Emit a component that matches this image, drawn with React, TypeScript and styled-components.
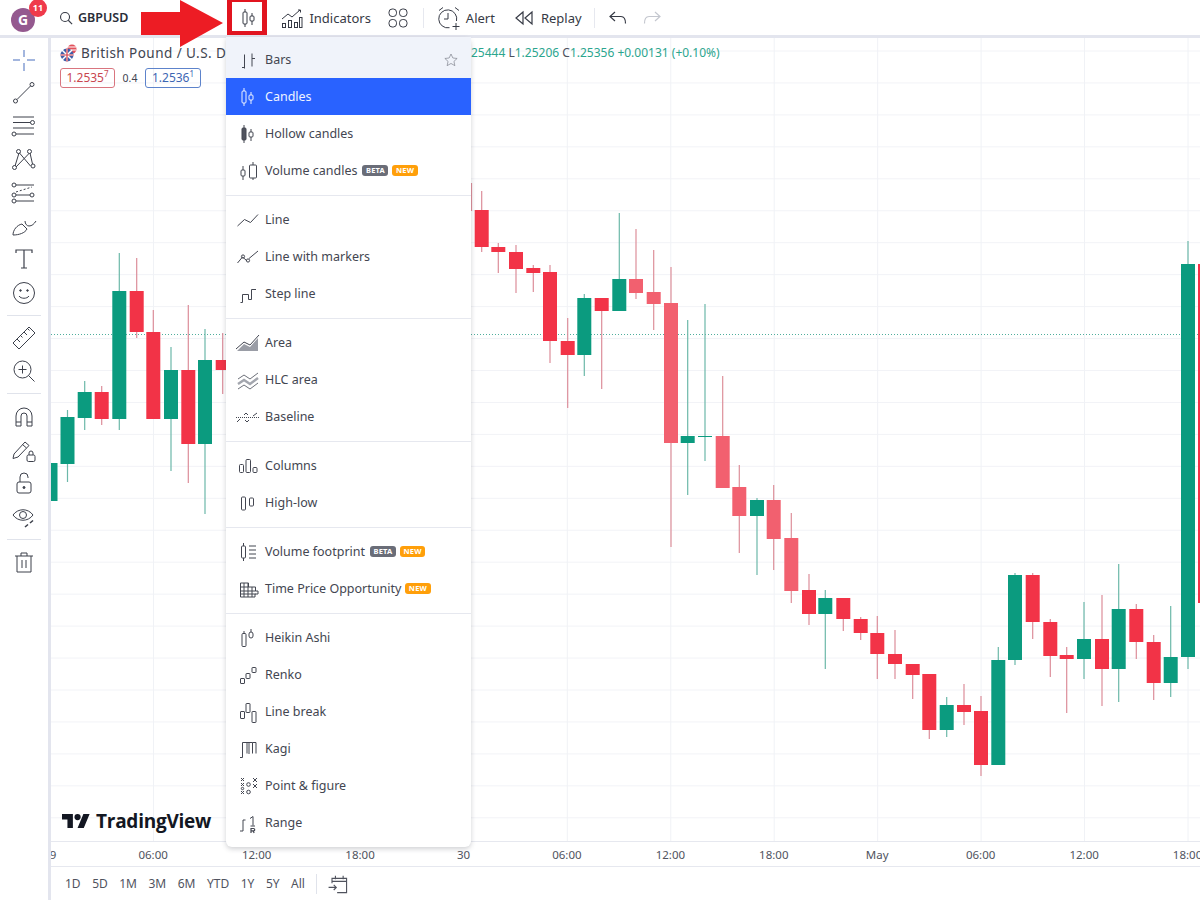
import * as React from 'react';
import styled, { createGlobalStyle } from 'styled-components';

const GlobalStyle = createGlobalStyle`
  html, body { margin: 0; padding: 0; background: #fff; }
  body { font-family: "Noto Sans", "Open Sans", Arial, sans-serif; color: #2a2e39; }
`;

type Kind = 'up' | 'down' | 'soft';
// x, wick top, wick bottom, body top, body bottom
type Candle = [number, number, number, number, number, Kind];

const candles: Candle[] = [
  [50.5, 463, 501, 463, 501, 'up'],
  [67.5, 410, 482, 417, 464, 'up'],
  [84.7, 381, 430, 392, 418, 'up'],
  [101.7, 386, 425, 392, 419, 'down'],
  [119.3, 253, 430, 291, 419, 'up'],
  [136.7, 258, 338, 291, 332, 'down'],
  [153.3, 310, 419, 332, 419, 'down'],
  [171, 347, 471, 370, 419, 'up'],
  [188.3, 305, 483, 370, 444, 'down'],
  [205, 329, 514, 360, 444, 'up'],
  [222.7, 333, 394, 360, 370, 'down'],
  [471.5, 183, 211, 211, 211, 'soft'],
  [481.7, 191, 252, 210, 247, 'down'],
  [498.3, 243, 273, 247, 252, 'down'],
  [516, 245, 293, 252, 269, 'down'],
  [533.3, 265, 292, 268, 273, 'down'],
  [550, 265, 363, 272, 341, 'down'],
  [567.7, 318, 408, 341, 355, 'down'],
  [584.3, 294, 376, 298, 355, 'up'],
  [601.7, 298, 389, 298, 311, 'down'],
  [619.3, 213, 311, 279, 311, 'up'],
  [636, 229, 299, 279, 293, 'soft'],
  [653.7, 250, 330, 292, 304, 'soft'],
  [671, 267, 547, 303, 443, 'soft'],
  [687.7, 320, 495, 436, 443, 'up'],
  [705, 304, 461, 436, 436.7, 'up'],
  [722.7, 376, 488, 436, 488, 'soft'],
  [739.3, 465, 553, 487, 516, 'soft'],
  [757, 498, 575, 500, 516, 'up'],
  [773.7, 485, 570, 500, 539, 'soft'],
  [791.3, 513, 603, 538, 591, 'soft'],
  [809, 574, 625, 590, 614, 'down'],
  [825.3, 590, 669, 598, 614, 'up'],
  [843.3, 598, 631, 598, 619, 'down'],
  [860.7, 617, 640, 619, 633, 'down'],
  [877.3, 616, 679, 633, 654, 'down'],
  [895, 630, 679, 654, 664, 'down'],
  [912.7, 664, 699, 664, 675, 'down'],
  [929.3, 674, 739, 674, 730, 'down'],
  [946.7, 697, 737, 705, 730, 'up'],
  [964, 684, 725, 705, 712, 'down'],
  [981, 696, 776, 711, 765, 'down'],
  [998.3, 647, 765, 660, 765, 'up'],
  [1015, 573, 665, 575, 660, 'up'],
  [1032.7, 573, 639, 575, 622, 'down'],
  [1050.3, 619, 677, 622, 656, 'down'],
  [1066.7, 647, 713, 655, 659, 'down'],
  [1084, 602, 679, 639, 659, 'up'],
  [1102, 595, 706, 639, 669, 'down'],
  [1118.7, 564, 702, 609, 669, 'up'],
  [1136.3, 604, 659, 609, 642, 'down'],
  [1153.7, 635, 700, 642, 683, 'down'],
  [1170.7, 606, 697, 657, 683, 'up'],
  [1188, 241, 669, 264, 657, 'up'],
  [1205, 250, 610, 264, 603, 'down'],
];

const bodyColor: Record<Kind, string> = { up: '#0b9b7f', down: '#f23347', soft: '#f2606f' };
const wickColor: Record<Kind, string> = { up: '#6cb8a9', down: '#dc8d99', soft: '#dd8f9a' };

const Page = styled.div`
  position: relative;
  width: 1200px;
  height: 900px;
  overflow: hidden;
  display: flex;
  flex-direction: column;
`;

const TopBar = styled.header`
  flex: 0 0 35px;
  display: flex;
  align-items: center;
  border-bottom: 3px solid #e3e5ee;
  font-size: 13px;
  color: #363a45;
`;

const Main = styled.div`
  flex: 1;
  display: flex;
  min-height: 0;
`;

const SideBar = styled.aside`
  flex: 0 0 48px;
  border-right: 3px solid #e3e5ee;
  padding-top: 5px;
  display: flex;
  flex-direction: column;
  color: #3c404b;
`;

const SideButton = styled.div`
  flex: 0 0 33.3px;
  display: flex;
  align-items: center;
  justify-content: center;
`;

const SideDivider = styled.div`
  flex: 0 0 12px;
  display: flex;
  align-items: center;
  justify-content: center;
  &::after {
    content: '';
    width: 34px;
    height: 1px;
    background: #e0e3eb;
  }
`;

const ChartColumn = styled.section`
  flex: 1;
  display: flex;
  flex-direction: column;
  min-width: 0;
`;

const ChartSvg = styled.svg`
  display: block;
  width: 1149px;
  height: 803px;
  flex: 0 0 803px;
`;

const TimeAxis = styled.div`
  flex: 0 0 26px;
  box-sizing: border-box;
  border-top: 1px solid #e6e8ef;
  border-bottom: 1px solid #e6e8ef;
  display: flex;
  align-items: center;
  overflow: hidden;
  font-size: 11.5px;
  color: #50535e;
`;

const TimeCell = styled.span<{ $lead?: boolean }>`
  flex: 0 0 103.45px;
  text-align: center;
  margin-left: ${p => (p.$lead ? '-53px' : '0')};
`;

const RangeBar = styled.footer`
  flex: 1;
  display: flex;
  align-items: center;
  padding-left: 14px;
  font-size: 12px;
  color: #50535e;
`;

const RangeItem = styled.span`
  margin-right: 11.5px;
`;

const RangeDivider = styled.span`
  width: 1px;
  height: 20px;
  background: #e0e3eb;
  margin: 0 9px 0 0;
`;

const AvatarWrap = styled.div`
  position: relative;
  width: 24px;
  height: 24px;
  margin: 4px 0 0 11px;
  border-radius: 50%;
  background: #94598f;
  color: #fff;
  font-size: 14px;
  font-weight: 700;
  display: flex;
  align-items: center;
  justify-content: center;
`;

const AvatarBadge = styled.span`
  position: absolute;
  top: -9px;
  right: -12px;
  width: 18px;
  height: 18px;
  border-radius: 50%;
  background: #ef3a4b;
  font-size: 9px;
  line-height: 18px;
  text-align: center;
`;

const ToolButton = styled.div<{ $left: number; $muted?: boolean }>`
  display: flex;
  align-items: center;
  gap: 3px;
  margin-left: ${p => p.$left}px;
  color: ${p => (p.$muted ? '#c4c7cf' : 'inherit')};
`;

const SymbolLabel = styled.span`
  font-size: 12.5px;
  font-weight: 600;
  color: #2a2e39;
`;

const ToolSep = styled.span<{ $left: number }>`
  width: 1px;
  height: 20px;
  background: #e6e8ef;
  margin-left: ${p => p.$left}px;
`;

const Glyph = styled.svg.attrs({ viewBox: '0 0 28 28' })<{ $size?: number }>`
  width: ${p => p.$size ?? 28}px;
  height: ${p => p.$size ?? 28}px;
  flex: none;
  fill: none;
  stroke: currentColor;
  stroke-width: 1;
`;

const Legend = styled.div`
  position: absolute;
  left: 60px;
  top: 43px;
  display: flex;
  flex-direction: column;
  gap: 6px;
`;

const LegendTop = styled.div`
  display: flex;
  align-items: center;
  height: 19px;
`;

const LegendTitle = styled.div`
  flex: 0 0 411px;
  display: flex;
  align-items: center;
  gap: 4px;
  font-size: 13.5px;
  letter-spacing: 0.45px;
  color: #40444f;
`;

const Ohlc = styled.div`
  font-size: 12px;
  color: #2ba58e;
  white-space: pre;
`;

const OhlcKey = styled.span`
  color: #4d515c;
`;

const PriceRow = styled.div`
  display: flex;
  align-items: center;
`;

const PriceChip = styled.span<{ $tone: 'sell' | 'buy' }>`
  box-sizing: border-box;
  height: 20px;
  width: ${p => (p.$tone === 'sell' ? 55 : 56)}px;
  border: 1px solid ${p => (p.$tone === 'sell' ? '#d9757f' : '#5d83cb')};
  border-radius: 3px;
  font-size: 12px;
  line-height: 18px;
  text-align: center;
  color: ${p => (p.$tone === 'sell' ? '#c9464f' : '#3d66b3')};
`;

const PriceTail = styled.sup`
  font-size: 8px;
  line-height: 0;
`;

const Spread = styled.span`
  width: 30px;
  text-align: center;
  font-size: 10.5px;
  color: #40444f;
`;

const Watermark = styled.div`
  position: absolute;
  left: 62px;
  top: 808px;
  display: flex;
  align-items: center;
  gap: 6px;
  color: #131722;
  font-family: "Open Sans", "Noto Sans", sans-serif;
  font-size: 19px;
  font-weight: 700;
  letter-spacing: -0.25px;
`;

const LogoMark = styled.svg`
  width: 28px;
  height: 14px;
  fill: #131722;
`;

const Menu = styled.div`
  position: absolute;
  left: 226px;
  top: 37px;
  width: 245px;
  padding-bottom: 6px;
  box-sizing: border-box;
  background: #fff;
  border-radius: 0 6px 6px 6px;
  box-shadow: 0 2px 5px rgba(40, 44, 60, 0.22);
  font-size: 12.5px;
  color: #434651;
`;

const MenuRow = styled.div<{ $state?: 'hover' | 'active' }>`
  height: ${p => (p.$state === 'hover' ? 41 : 37)}px;
  padding: ${p => (p.$state === 'hover' ? '4px 12px 0 8px' : '0 12px 0 8px')};
  box-sizing: border-box;
  display: flex;
  align-items: center;
  gap: 3px;
  background: ${p => (p.$state === 'hover' ? '#f0f3fa' : p.$state === 'active' ? '#2962ff' : 'transparent')};
  color: ${p => (p.$state === 'active' ? '#eef3ff' : 'inherit')};
`;

const MenuLabel = styled.span`
  white-space: nowrap;
`;

const MenuDivider = styled.div`
  height: 12px;
  display: flex;
  align-items: center;
  &::after {
    content: '';
    flex: 1;
    height: 1px;
    background: #e6e8ef;
  }
`;

const Tag = styled.span<{ $tone: 'beta' | 'fresh' }>`
  margin-left: ${p => (p.$tone === 'beta' ? 2 : 1)}px;
  height: 11px;
  padding: 0 3.5px;
  border-radius: 3px;
  background: ${p => (p.$tone === 'beta' ? '#6a6d78' : '#ff9f0a')};
  color: #fff;
  font-size: 7.5px;
  font-weight: 700;
  line-height: 11px;
  letter-spacing: 0.2px;
`;

const FavStar = styled.svg`
  margin-left: auto;
  width: 16px;
  height: 16px;
  fill: none;
  stroke: #787b86;
  stroke-width: 1;
`;

const RedBox = styled.div`
  position: absolute;
  left: 227px;
  top: -2px;
  width: 40px;
  height: 37px;
  box-sizing: border-box;
  border: 5px solid #e1141f;
  border-top-width: 4px;
  border-bottom-width: 4px;
`;

const RedArrow = styled.svg`
  position: absolute;
  left: 141px;
  top: 0;
  width: 82px;
  height: 47px;
  fill: #ed1c24;
`;

/* toolbar and menu drawings */
const CandlesIcon = () => (
  <Glyph>
    <path d="M10 5v3M10 20v3M17 9v3M17 17v4" />
    <rect x="8" y="8" width="4" height="12" rx="1" />
    <rect x="15" y="12" width="4" height="5" rx="1" />
  </Glyph>
);
const BarsIcon = () => (
  <Glyph>
    <path d="M10.5 8.5v14M8 21.5h2.5M18 7.5v13M18 12.5h3" />
  </Glyph>
);
const HollowIcon = () => (
  <Glyph>
    <path d="M10 5v3M10 20v3M17 9v3M17 17v4" />
    <rect x="8" y="8" width="4" height="12" rx="1" fill="#50535e" />
    <rect x="15" y="12" width="4" height="5" rx="1" />
  </Glyph>
);
const VolumeCandlesIcon = () => (
  <Glyph>
    <path d="M9 9v4M9 19v4M19 5v3M19 21v2" />
    <rect x="7" y="13" width="4" height="6" rx="1" />
    <rect x="15.5" y="8" width="7" height="13" rx="1" />
  </Glyph>
);
const LineIcon = () => (
  <Glyph>
    <path d="M3.5 20l7-6.5 6 3 7.5-8" />
  </Glyph>
);
const MarkersIcon = () => (
  <Glyph>
    <path d="M3.5 20l5-6 3.5 3 1 1M15 15.5l9-7.5" />
    <circle cx="9" cy="13.5" r="1.6" />
    <circle cx="14" cy="17.5" r="1.6" />
  </Glyph>
);
const StepIcon = () => (
  <Glyph>
    <path d="M6.5 22.5H8.5V14.5H14.5V19.5H17.5V9.5H22" />
  </Glyph>
);
const AreaIcon = () => (
  <Glyph>
    <path d="M3 22l7-7 6 3 8-9v13H3z" fill="#9a9da6" stroke="none" />
    <path d="M2 20l8-7 6 3 9-10" />
  </Glyph>
);
const HlcIcon = () => (
  <Glyph>
    <path d="M4 13l6-4 6 4 8-6" stroke="#6d7079" />
    <path d="M4 18l6-4 6 4 8-6" strokeWidth="2.5" stroke="#a3a6ae" />
    <path d="M4 23l6-4 6 4 8-6" stroke="#6d7079" />
  </Glyph>
);
const BaselineIcon = () => (
  <Glyph>
    <path d="M2 14.5h24" strokeDasharray="1 1" />
    <path d="M3 19l3-3M10 12l2-2 2 2M11 17l2 2 2-2M19 13l4-3" />
  </Glyph>
);
const ColumnsIcon = () => (
  <Glyph>
    <rect x="5.5" y="12.5" width="4" height="8" rx="1" />
    <rect x="12" y="7.5" width="4.5" height="13" rx="1" />
    <rect x="19" y="15.5" width="4" height="5" rx="1" />
  </Glyph>
);
const HighLowIcon = () => (
  <Glyph>
    <rect x="7.5" y="8" width="4" height="13" rx="1" />
    <rect x="15.5" y="9" width="4" height="8" rx="1" />
  </Glyph>
);
const FootprintIcon = () => (
  <Glyph>
    <path d="M9.5 5v3M9.5 20v3M15 8h7M15 12h7M15 16h7M15 20h7" />
    <rect x="7.5" y="8" width="4" height="12" rx="1" />
  </Glyph>
);
const TpoIcon = () => (
  <Glyph>
    <path d="M6.5 8h8v4h7v4h2.5v3H21v3H6.5zM10 8v14M14 8v14M18 12v10M6.5 12h8M6.5 16h15M6.5 19h15" />
  </Glyph>
);
const HeikinIcon = () => (
  <Glyph>
    <path d="M17 5v3" />
    <rect x="8" y="9.5" width="4" height="13" rx="1" />
    <path d="M10 7v2.5" />
    <rect x="15" y="8" width="4" height="6" rx="2" />
  </Glyph>
);
const RenkoIcon = () => (
  <Glyph>
    <rect x="6.5" y="17.5" width="4" height="5" rx="0.5" />
    <rect x="12" y="12.5" width="4" height="5" rx="0.5" />
    <rect x="18" y="6.5" width="4" height="5" rx="0.5" />
  </Glyph>
);
const LineBreakIcon = () => (
  <Glyph>
    <rect x="6.5" y="13.5" width="4" height="7" rx="0.5" />
    <rect x="12" y="5.5" width="4" height="9" rx="0.5" />
    <rect x="18" y="13.5" width="4" height="11" rx="0.5" />
  </Glyph>
);
const KagiIcon = () => (
  <Glyph>
    <path d="M6 22.5h2.5V7.5h4.5V18.5h0M13 7.5h2V19M15 7.5h3.5v11M18.5 7.5H22V18.5" />
  </Glyph>
);
const PointFigureIcon = () => (
  <Glyph>
    <path d="M7 6l3 3M10 6l-3 3M7 11l3 3M10 11l-3 3M7 19l3 3M10 19l-3 3M19 6l4 4M23 6l-4 4M19 12l4 4M23 12l-4 4" />
    <circle cx="14.5" cy="12.5" r="1.8" />
    <circle cx="14.5" cy="20" r="1.8" />
    <circle cx="8.5" cy="16.5" r="1.2" />
  </Glyph>
);
const RangeIcon = () => (
  <Glyph>
    <path d="M6 22h3V11h2.5M16 9.5l3-2v9M16.5 17h4.5" />
    <path d="M17 19.5h2.5a1 1 0 0 1 0 2.4H17zM17 19.5V24M19 22l1.2 2" strokeWidth="1.2" />
  </Glyph>
);

const IndicatorsIcon = () => (
  <Glyph>
    <path d="M4 15l6-5 4 3 8-7M20 6h2.5v2.5" />
    <rect x="4.5" y="19.5" width="3" height="4" />
    <rect x="10.5" y="16.5" width="3" height="7" />
    <rect x="16.5" y="18.5" width="3" height="5" />
    <rect x="21.5" y="13.5" width="2.5" height="10" />
  </Glyph>
);
const AppsIcon = () => (
  <Glyph>
    <rect x="5" y="5" width="7.5" height="7.5" rx="3.2" />
    <rect x="15.5" y="5" width="7.5" height="7.5" rx="3.2" />
    <rect x="5" y="15.5" width="7.5" height="7.5" rx="3.2" />
    <rect x="15.5" y="15.5" width="7.5" height="7.5" rx="3.2" />
  </Glyph>
);
const AlertIcon = () => (
  <Glyph>
    <path d="M21.5 17a9 9 0 1 0-7 6.7M13 9v6h-4M4 6.5l4-3M24 6.5l-4-3M21 19v7M17.5 22.5h7" />
  </Glyph>
);
const ReplayIcon = () => (
  <Glyph>
    <path d="M13 8l-7 6 7 6zM22 8l-7 6 7 6z" strokeWidth="1.2" />
  </Glyph>
);
const UndoIcon = () => (
  <Glyph>
    <path d="M11 8l-5 4.5 5 4.5M6 12.5h11c3 0 4.5 2.5 4.5 7" strokeWidth="1.2" />
  </Glyph>
);
const RedoIcon = () => (
  <Glyph>
    <path d="M17 8l5 4.5-5 4.5M22 12.5H11c-3 0-4.5 2.5-4.5 7" strokeWidth="1.2" />
  </Glyph>
);
const SearchIcon = () => (
  <Glyph $size={18}>
    <circle cx="12.5" cy="12.5" r="7" strokeWidth="1.7" />
    <path d="M17.5 17.5l6 6" strokeWidth="1.7" />
  </Glyph>
);
const CalendarIcon = () => (
  <Glyph $size={24}>
    <path d="M7 13V7.5h17V24h-11M7 11h17M11 4.5v4M20 4.5v4M3 18h9M9 15l3 3-3 3" strokeWidth="1.3" />
  </Glyph>
);

/* sidebar drawings */
const sideTools: React.ReactNode[][] = [
  [
    <path key="a" d="M14 4v7M14 17v8M3 14h7M17 14h8" stroke="#a3b6de" strokeWidth="2" />,
    <g key="b">
      <circle cx="22" cy="5.5" r="2" />
      <circle cx="5.5" cy="22" r="2" />
      <path d="M7 20.5L20.5 7" />
    </g>,
    <g key="c">
      <path d="M3 5h21M3 10.5h17.5M3 16h21M6 22h18" />
      <circle cx="22.5" cy="10.5" r="2" />
      <circle cx="4" cy="22" r="2" />
    </g>,
    <g key="d">
      <path d="M9 7L5 20M9.5 7l11 13M19 7.5L6 21M20 7l2.5 11" />
      <circle cx="8.5" cy="5.5" r="2" />
      <circle cx="19.5" cy="5.5" r="2" />
      <circle cx="4.5" cy="21.5" r="2" />
      <circle cx="23" cy="20" r="2" />
    </g>,
    <g key="e">
      <path d="M6 6h18M6 16h14M6 22h18" />
      <path d="M6 13l16-5" strokeDasharray="2 2" />
      <circle cx="4" cy="6" r="2" />
      <circle cx="4" cy="16" r="2" />
      <circle cx="4" cy="22" r="2" />
      <circle cx="22" cy="16" r="2" />
    </g>,
    <g key="f">
      <path d="M3 23c0-5 4-10 9-11l5 5c-2 4-8 6-14 6z" />
      <path d="M15 9c0 3 2 5 4 5 3 0 5-2 7-5" />
    </g>,
    <path key="g" d="M6 8V5h16v3M14 5v18M11 23h6" strokeWidth="1.2" />,
    <g key="h">
      <circle cx="14" cy="14" r="10.5" />
      <path d="M9 17c2 3 8 3 10 0" />
      <circle cx="10.5" cy="11.5" r="0.8" fill="currentColor" />
      <circle cx="17.5" cy="11.5" r="0.8" fill="currentColor" />
    </g>,
  ],
  [
    <path
      key="a"
      d="M3 19L19 3l6 6L9 25zM7 15l3 3M10.5 11.5l2 2M14 8l3 3M17.5 4.5l2 2"
    />,
    <g key="b">
      <circle cx="12.5" cy="12.5" r="8.5" />
      <path d="M18.5 18.5l6 6M12.5 8.5v8M8.5 12.5h8" />
    </g>,
  ],
  [
    <path
      key="a"
      d="M6 23V13a8 8 0 0 1 16 0v10h-5V13a3 3 0 0 0-6 0v10zM6 19h5M17 19h5"
    />,
    <g key="b">
      <path d="M4 18L15 6l4 3.5L8 21l-5 1.5zM12.5 8.5l4 3.5" />
      <rect x="17" y="19" width="8" height="6.5" rx="1.5" />
      <path d="M19 19v-2a2 2 0 0 1 4 0v2" />
    </g>,
    <g key="c">
      <rect x="7" y="13" width="14" height="11" rx="2" />
      <path d="M10 13V8a4 4 0 0 1 8 0v1" />
      <circle cx="14" cy="18.5" r="1" fill="currentColor" />
    </g>,
    <g key="d">
      <path d="M3 12c5-7 15-7 20 0-5 7-15 7-20 0z" />
      <circle cx="13" cy="12" r="3.5" />
      <path d="M15 24l3-2.5M20 20l3-2.5" strokeWidth="1.6" />
    </g>,
  ],
  [
    <g key="a">
      <path d="M5 8h18M11 8V5h6v3M7 8v16h14V8M12 12v8M16 12v8" />
    </g>,
  ],
];

type MenuItem = {
  label: string;
  icon: React.ReactNode;
  beta?: boolean;
  fresh?: boolean;
  state?: 'hover' | 'active';
  fav?: boolean;
};

const menuGroups: MenuItem[][] = [
  [
    { label: 'Bars', icon: <BarsIcon />, state: 'hover', fav: true },
    { label: 'Candles', icon: <CandlesIcon />, state: 'active' },
    { label: 'Hollow candles', icon: <HollowIcon /> },
    { label: 'Volume candles', icon: <VolumeCandlesIcon />, beta: true, fresh: true },
  ],
  [
    { label: 'Line', icon: <LineIcon /> },
    { label: 'Line with markers', icon: <MarkersIcon /> },
    { label: 'Step line', icon: <StepIcon /> },
  ],
  [
    { label: 'Area', icon: <AreaIcon /> },
    { label: 'HLC area', icon: <HlcIcon /> },
    { label: 'Baseline', icon: <BaselineIcon /> },
  ],
  [
    { label: 'Columns', icon: <ColumnsIcon /> },
    { label: 'High-low', icon: <HighLowIcon /> },
  ],
  [
    { label: 'Volume footprint', icon: <FootprintIcon />, beta: true, fresh: true },
    { label: 'Time Price Opportunity', icon: <TpoIcon />, fresh: true },
  ],
  [
    { label: 'Heikin Ashi', icon: <HeikinIcon /> },
    { label: 'Renko', icon: <RenkoIcon /> },
    { label: 'Line break', icon: <LineBreakIcon /> },
    { label: 'Kagi', icon: <KagiIcon /> },
    { label: 'Point & figure', icon: <PointFigureIcon /> },
    { label: 'Range', icon: <RangeIcon /> },
  ],
];

const timeLabels = ['29', '06:00', '12:00', '18:00', '30', '06:00', '12:00', '18:00', 'May', '06:00', '12:00', '18:00'];
const ranges = ['1D', '5D', '1M', '3M', '6M', 'YTD', '1Y', '5Y', 'All'];

const gridRows = Array.from({ length: 25 }, (_, i) => 51 + i * 31.95);
const gridCols = Array.from({ length: 11 }, (_, i) => 153.5 + i * 103.45);

function Chart() {
  return (
    <ChartSvg viewBox="51 38 1149 803">
      {gridRows.map(y => (
        <line key={y} x1="51" x2="1200" y1={y} y2={y} stroke="#f2f3f7" />
      ))}
      {gridCols.map(x => (
        <line key={x} x1={x} x2={x} y1="38" y2="841" stroke="#f0f2f6" />
      ))}
      <line x1="51" x2="1200" y1="334.5" y2="334.5" stroke="#4fae9d" strokeDasharray="1 2" />
      {candles.map(([x, wt, wb, bt, bb, kind]) => (
        <g key={x}>
          <line x1={x} x2={x} y1={wt} y2={wb} stroke={wickColor[kind]} strokeWidth="1.2" />
          {bb > bt && <rect x={x - 7} y={bt} width="14" height={Math.max(bb - bt, 1)} fill={bodyColor[kind]} />}
        </g>
      ))}
    </ChartSvg>
  );
}

export default function App() {
  return (
    <Page>
      <GlobalStyle />
      <TopBar>
        <AvatarWrap>
          G<AvatarBadge>11</AvatarBadge>
        </AvatarWrap>
        <ToolButton $left={22}>
          <SearchIcon />
          <SymbolLabel>GBPUSD</SymbolLabel>
        </ToolButton>
        <ToolButton $left={107}>
          <CandlesIcon />
        </ToolButton>
        <ToolButton $left={15}>
          <IndicatorsIcon />
          <span>Indicators</span>
        </ToolButton>
        <ToolButton $left={13}>
          <AppsIcon />
        </ToolButton>
        <ToolSep $left={11} />
        <ToolButton $left={11}>
          <AlertIcon />
          <span>Alert</span>
        </ToolButton>
        <ToolButton $left={15}>
          <ReplayIcon />
          <span>Replay</span>
        </ToolButton>
        <ToolSep $left={12} />
        <ToolButton $left={9}>
          <UndoIcon />
        </ToolButton>
        <ToolButton $left={6} $muted>
          <RedoIcon />
        </ToolButton>
      </TopBar>
      <Main>
        <SideBar>
          {sideTools.map((group, g) => (
            <React.Fragment key={g}>
              {g > 0 && <SideDivider />}
              {group.map((tool, t) => (
                <SideButton key={t}>
                  <Glyph>{tool}</Glyph>
                </SideButton>
              ))}
            </React.Fragment>
          ))}
        </SideBar>
        <ChartColumn>
          <Chart />
          <TimeAxis>
            {timeLabels.map((label, i) => (
              <TimeCell key={i} $lead={i === 0}>
                {label}
              </TimeCell>
            ))}
          </TimeAxis>
          <RangeBar>
            {ranges.map(r => (
              <RangeItem key={r}>{r}</RangeItem>
            ))}
            <RangeDivider />
            <CalendarIcon />
          </RangeBar>
        </ChartColumn>
      </Main>

      <Legend>
        <LegendTop>
          <LegendTitle>
            <svg width="17" height="18" viewBox="0 0 17 18">
              <circle cx="12" cy="5" r="4.5" fill="#e2525c" />
              <path d="M8 3h8M8 6h8" stroke="#fff" />
              <circle cx="7" cy="11" r="6.5" fill="#3f5ea8" />
              <path d="M2 6l10 10M12 6L2 16M7 4.5v13M.5 11h13" stroke="#fff" strokeWidth="1.5" />
              <path d="M7 4.5v13M.5 11h13" stroke="#d9414b" strokeWidth="1.2" />
            </svg>
            British Pound / U.S. D
          </LegendTitle>
          <Ohlc>
            25444 <OhlcKey>L</OhlcKey>1.25206 <OhlcKey>C</OhlcKey>1.25356 +0.00131 (+0.10%)
          </Ohlc>
        </LegendTop>
        <PriceRow>
          <PriceChip $tone="sell">
            1.2535<PriceTail>7</PriceTail>
          </PriceChip>
          <Spread>0.4</Spread>
          <PriceChip $tone="buy">
            1.2536<PriceTail>1</PriceTail>
          </PriceChip>
        </PriceRow>
      </Legend>

      <Watermark>
        <LogoMark viewBox="0 4 36 18">
          <path d="M14 22H7V11H0V4h14v18zM28 22h-8l7.5-18h8L28 22z" />
          <circle cx="20" cy="8" r="4" />
        </LogoMark>
        TradingView
      </Watermark>

      <Menu>
        {menuGroups.map((group, g) => (
          <React.Fragment key={g}>
            {g > 0 && <MenuDivider />}
            {group.map(item => (
              <MenuRow key={item.label} $state={item.state}>
                {item.icon}
                <MenuLabel>{item.label}</MenuLabel>
                {item.beta && <Tag $tone="beta">BETA</Tag>}
                {item.fresh && <Tag $tone="fresh">NEW</Tag>}
                {item.fav && (
                  <FavStar viewBox="0 0 24 24">
                    <path d="M12 3l2.8 6 6.4.7-4.8 4.4 1.4 6.4L12 17.2l-5.800 3.300 1.400-6.400L2.800 9.700l6.400-.700z" />
                  </FavStar>
                )}
              </MenuRow>
            ))}
          </React.Fragment>
        ))}
      </Menu>

      <RedBox />
      <RedArrow viewBox="0 0 82 47">
        <path d="M0 12h39V0l43 23-43 24V35H0z" />
      </RedArrow>
    </Page>
  );
}
